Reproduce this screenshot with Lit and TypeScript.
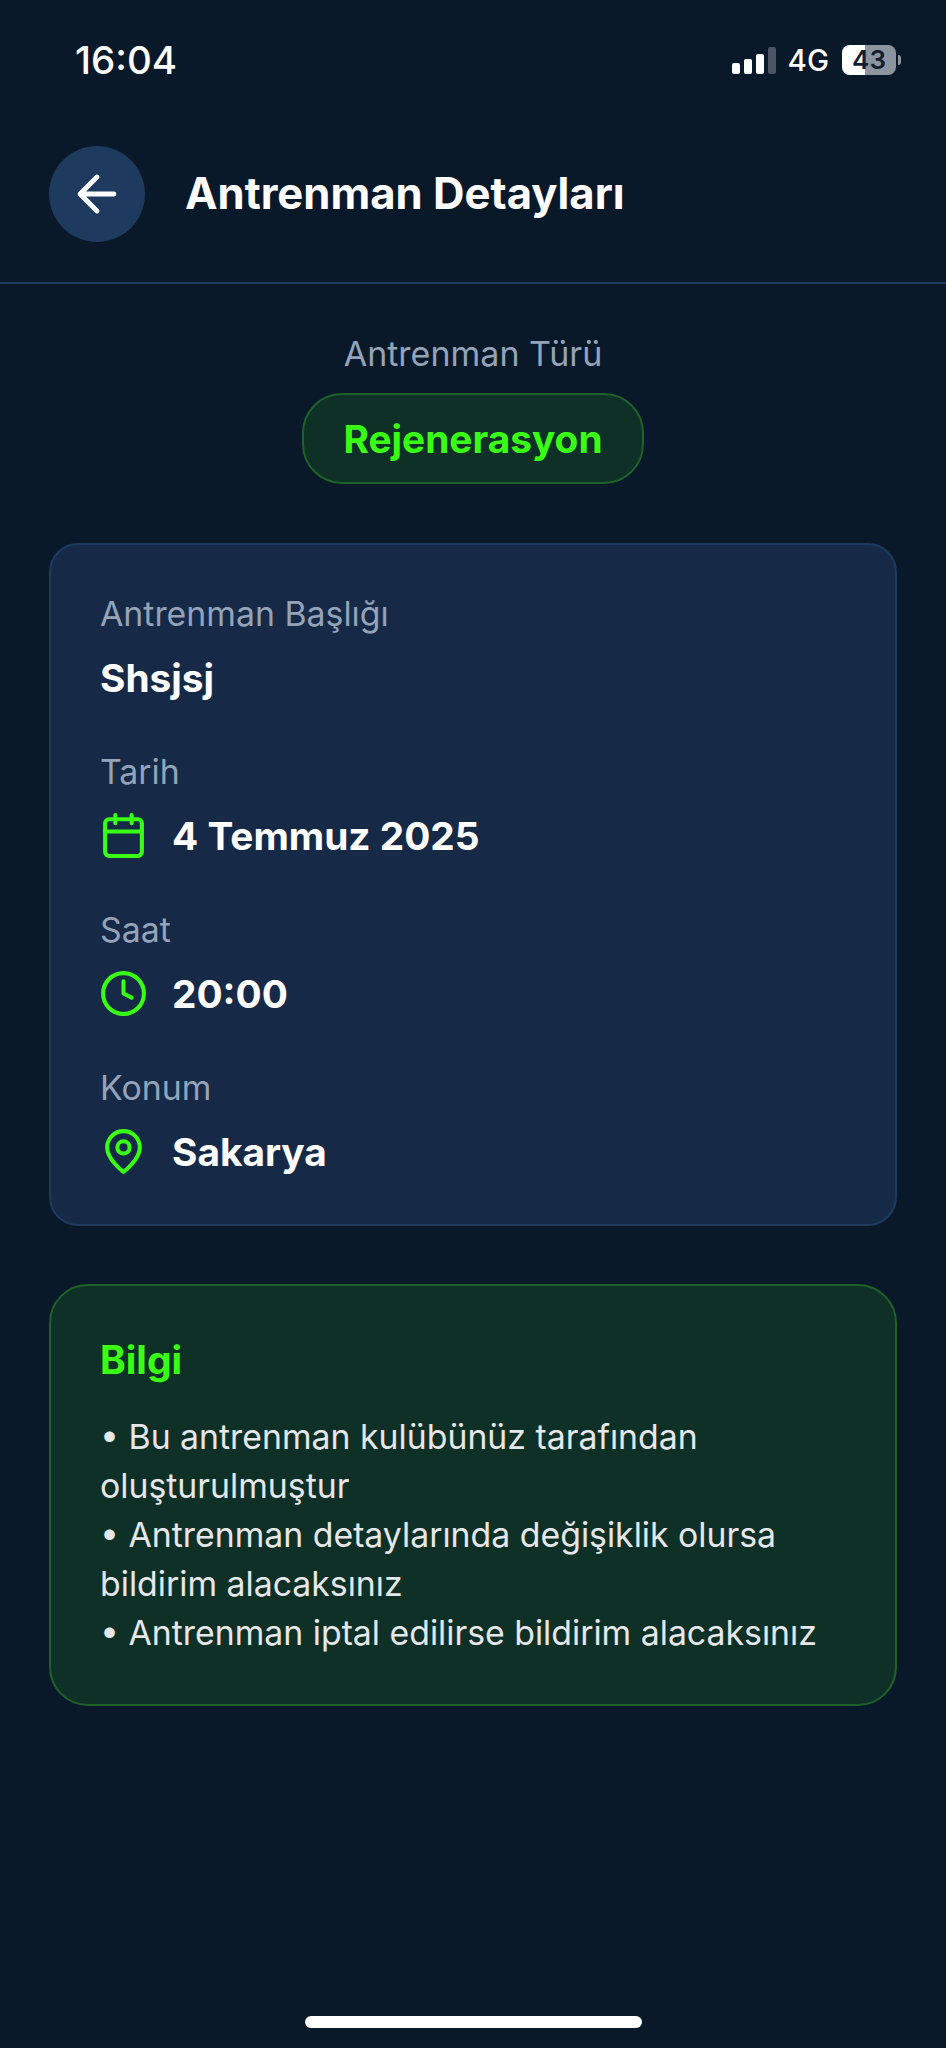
import { LitElement, html, css } from 'lit';
import { customElement } from 'lit/decorators.js';

const calendarIcon = html`<svg class="icon" viewBox="0 0 24 24" fill="none" stroke="currentColor" stroke-width="2" stroke-linecap="round" stroke-linejoin="round"><rect x="3" y="4" width="18" height="18" rx="2"></rect><path d="M16 2v4M8 2v4M3 10h18"></path></svg>`;
const clockIcon = html`<svg class="icon" viewBox="0 0 24 24" fill="none" stroke="currentColor" stroke-width="2" stroke-linecap="round" stroke-linejoin="round"><circle cx="12" cy="12" r="10"></circle><path d="M12 6v6l4 2"></path></svg>`;
const pinIcon = html`<svg class="icon" viewBox="0 0 24 24" fill="none" stroke="currentColor" stroke-width="2" stroke-linecap="round" stroke-linejoin="round"><path d="M20 10c0 6-8 12-8 12s-8-6-8-12a8 8 0 0 1 16 0Z"></path><circle cx="12" cy="10" r="3"></circle></svg>`;

@customElement('app-root')
export class AppRoot extends LitElement {
  static styles = css`
    :host {
      display: block;
      font-family: Inter, "Liberation Sans", sans-serif;
    }
    .screen {
      width: 946px;
      height: 2048px;
      background: #0a1929;
      color: #fff;
      display: flex;
      flex-direction: column;
      overflow: hidden;
    }
    .status {
      height: 120px;
      flex: none;
      box-sizing: border-box;
      padding: 38px 45px 0 75px;
      display: flex;
      justify-content: space-between;
      align-items: flex-start;
    }
    .time {
      font-size: 38.5px;
      line-height: 44px;
      font-weight: 500;
    }
    .status-right {
      display: flex;
      align-items: center;
      gap: 12px;
      height: 44px;
    }
    .signal {
      display: flex;
      align-items: flex-end;
      gap: 4px;
      height: 27px;
    }
    .signal span {
      width: 8px;
      border-radius: 2px;
      background: #fff;
    }
    .signal .off {
      background: #4b5563;
    }
    .net {
      font-size: 29.5px;
      font-weight: 500;
      margin-right: 1px;
    }
    .battery {
      display: flex;
      align-items: center;
      gap: 2px;
    }
    .cell {
      position: relative;
      width: 54px;
      height: 30px;
      border-radius: 8px;
      overflow: hidden;
      background: #8c949e;
      color: #141e30;
      font-size: 26px;
      line-height: 30px;
      text-align: center;
    }
    .cell i {
      position: absolute;
      left: 0;
      top: 0;
      bottom: 0;
      width: 43%;
      background: #fff;
    }
    .cell b {
      position: relative;
      font-weight: 600;
    }
    .nub {
      width: 3px;
      height: 10px;
      border-radius: 0 3px 3px 0;
      background: #8c949e;
    }
    .header {
      height: 164px;
      flex: none;
      box-sizing: border-box;
      display: flex;
      align-items: flex-start;
      gap: 40px;
      padding: 26px 49px 0;
      border-bottom: 2px solid #1e3a5f;
    }
    .back {
      width: 96px;
      height: 96px;
      border-radius: 50%;
      background: #1e3a5f;
      display: flex;
      align-items: center;
      justify-content: center;
      flex: none;
    }
    .back svg {
      width: 58px;
      height: 58px;
    }
    h1 {
      margin: 0;
      font-size: 43.6px;
      line-height: 96px;
      font-weight: 700;
    }
    .type {
      display: flex;
      flex-direction: column;
      align-items: center;
      margin-top: 49px;
    }
    .type-label {
      font-size: 34px;
      line-height: 42px;
      color: #94a3b8;
    }
    .pill {
      margin-top: 18px;
      height: 91px;
      box-sizing: border-box;
      padding: 0 39px;
      display: flex;
      align-items: center;
      font-size: 38.8px;
      font-weight: 700;
      color: #39ff14;
      background: #0f3027;
      border: 2.4px solid #1f6228;
      border-radius: 40px;
    }
    .card {
      margin: 59px 49px 0;
      box-sizing: border-box;
      height: 683px;
      padding: 48px 49px;
      background: #162a48;
      border: 2px solid #1e3a5f;
      border-radius: 29px;
      display: flex;
      flex-direction: column;
      gap: 49px;
    }
    .label {
      font-size: 33.85px;
      line-height: 42px;
      color: #94a3b8;
    }
    .value {
      margin-top: 17px;
      height: 50px;
      display: flex;
      align-items: center;
      gap: 24px;
      font-size: 38.8px;
      font-weight: 700;
    }
    .icon {
      width: 49px;
      height: 49px;
      margin-left: -1px;
      color: #39ff14;
      flex: none;
    }
    .info {
      margin: 58px 49px 0;
      box-sizing: border-box;
      height: 422px;
      padding: 50px 49px;
      background: #0f3027;
      border: 2.4px solid #1f6228;
      border-radius: 39px;
    }
    h2 {
      margin: 0;
      font-size: 39px;
      line-height: 48px;
      font-weight: 700;
      color: #39ff14;
    }
    .info p {
      margin: 28px 0 0;
      font-size: 33.8px;
      line-height: 49px;
      color: #e5e7eb;
    }
    .home {
      margin: auto auto 20px;
      width: 337px;
      height: 12px;
      border-radius: 6px;
      background: #fff;
    }
  `;

  render() {
    return html`
      <div class="screen">
        <div class="status">
          <div class="time">16:04</div>
          <div class="status-right">
            <div class="signal">
              <span style="height:11px"></span>
              <span style="height:15px"></span>
              <span style="height:20px"></span>
              <span class="off" style="height:27px"></span>
            </div>
            <div class="net">4G</div>
            <div class="battery">
              <div class="cell"><i></i><b>43</b></div>
              <div class="nub"></div>
            </div>
          </div>
        </div>
        <div class="header">
          <div class="back">
            <svg viewBox="0 0 24 24" fill="none" stroke="#fff" stroke-width="2" stroke-linecap="round" stroke-linejoin="round"><path d="M19 12H5M12 19l-7-7 7-7"></path></svg>
          </div>
          <h1>Antrenman Detayları</h1>
        </div>
        <div class="type">
          <div class="type-label">Antrenman Türü</div>
          <div class="pill">Rejenerasyon</div>
        </div>
        <div class="card">
          <div>
            <div class="label">Antrenman Başlığı</div>
            <div class="value">Shsjsj</div>
          </div>
          <div>
            <div class="label">Tarih</div>
            <div class="value">${calendarIcon}4 Temmuz 2025</div>
          </div>
          <div>
            <div class="label">Saat</div>
            <div class="value">${clockIcon}20:00</div>
          </div>
          <div>
            <div class="label">Konum</div>
            <div class="value">${pinIcon}Sakarya</div>
          </div>
        </div>
        <div class="info">
          <h2>Bilgi</h2>
          <p>
            • Bu antrenman kulübünüz tarafından oluşturulmuştur<br />
            • Antrenman detaylarında değişiklik olursa bildirim alacaksınız<br />
            • Antrenman iptal edilirse bildirim alacaksınız
          </p>
        </div>
        <div class="home"></div>
      </div>
    `;
  }
}
